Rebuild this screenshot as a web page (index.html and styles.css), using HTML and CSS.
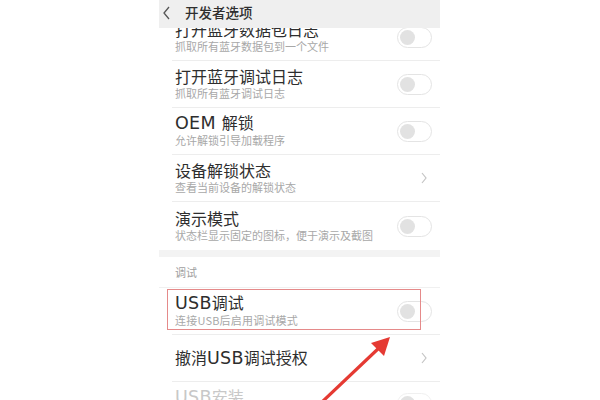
FILE: index.html
```html
<!DOCTYPE html>
<html lang="zh-CN">
<head>
    <meta charset="UTF-8">
    <meta name="viewport" content="width=device-width, initial-scale=1.0">
    <title>开发者选项</title>
    <link rel="stylesheet" href="styles.css">
</head>
<body>
    <div class="screen">
        <div class="top-bar">
            <svg class="back" width="10" height="14" viewBox="0 0 10 14">
                <polyline points="7,1 2,7 7,13" fill="none" stroke="#555" stroke-width="1.3"/>
            </svg>
            <span class="top-title">开发者选项</span>
        </div>
        <div class="list">
            <div class="row">
                <div class="text">
                    <div class="title">打开蓝牙数据包日志</div>
                    <div class="sub">抓取所有蓝牙数据包到一个文件</div>
                </div>
                <span class="switch"></span>
            </div>
            <div class="row">
                <div class="text">
                    <div class="title">打开蓝牙调试日志</div>
                    <div class="sub">抓取所有蓝牙调试日志</div>
                </div>
                <span class="switch"></span>
            </div>
            <div class="row">
                <div class="text">
                    <div class="title"><span class="en">OEM </span>解锁</div>
                    <div class="sub">允许解锁引导加载程序</div>
                </div>
                <span class="switch"></span>
            </div>
            <div class="row">
                <div class="text">
                    <div class="title">设备解锁状态</div>
                    <div class="sub">查看当前设备的解锁状态</div>
                </div>
                <svg class="chevron" width="8" height="12" viewBox="0 0 8 12">
                    <polyline points="2,1 6,6 2,11" fill="none" stroke="#c4c4c4" stroke-width="1.2"/>
                </svg>
            </div>
            <div class="row last">
                <div class="text">
                    <div class="title">演示模式</div>
                    <div class="sub">状态栏显示固定的图标，便于演示及截图</div>
                </div>
                <span class="switch"></span>
            </div>
            <div class="gap"></div>
            <div class="section">调试</div>
            <div class="row marked">
                <div class="text">
                    <div class="title"><span class="en">USB</span>调试</div>
                    <div class="sub"><span class="en">连接USB后启用调试模式</span></div>
                </div>
                <span class="switch"></span>
                <span class="mark"></span>
            </div>
            <div class="row single">
                <div class="text">
                    <div class="title">撤消<span class="en">USB</span>调试授权</div>
                </div>
                <svg class="chevron" width="8" height="12" viewBox="0 0 8 12">
                    <polyline points="2,1 6,6 2,11" fill="none" stroke="#c4c4c4" stroke-width="1.2"/>
                </svg>
            </div>
            <div class="row faded">
                <div class="text">
                    <div class="title"><span class="en">USB</span>安装</div>
                    <div class="sub">允许通过USB安装应用</div>
                </div>
                <span class="switch"></span>
            </div>
        </div>
    </div>
    <svg class="arrow" width="600" height="400" viewBox="0 0 600 400">
        <line x1="322" y1="402" x2="380" y2="347" stroke="#e53a33" stroke-width="3.2" stroke-linecap="round"/>
        <polygon points="390,337 371,343 384,356" fill="#e53a33"/>
    </svg>
</body>
</html>
```

FILE: styles.css
```css
body, html {
    margin: 0;
    padding: 0;
    height: 100%;
    background: #fff;
    overflow: hidden;
}

body {
    font-family: "Noto Sans CJK SC", "Noto Sans", sans-serif;
    color: #333;
}

.screen {
    width: 281px;
    height: 400px;
    margin-left: 159px;
    overflow: hidden;
    background: #fff;
}

.top-bar {
    position: relative;
    z-index: 2;
    height: 28px;
    background: #efefef;
    display: flex;
    align-items: center;
    padding-left: 3px;
}

.back {
    margin-top: -2px;
}

.top-title {
    margin-left: 13px;
    font-size: 13.5px;
    font-weight: 500;
    line-height: 24px;
    margin-top: -4px;
    color: #2f2f2f;
}

.list {
    margin-top: -14px;
}

.row {
    position: relative;
    height: 46px;
    margin-left: 13px;
    padding: 0 8px 0 3px;
    border-bottom: 1px solid #ededed;
    display: flex;
    align-items: center;
}

.row.last {
    border-bottom: none;
    height: 48px;
}

.text {
    flex: 1;
    margin-top: -2px;
}

.title {
    font-size: 16px;
    line-height: 20px;
    color: #2e2e2e;
}

.title .en {
    font-family: "DejaVu Sans", sans-serif;
    font-size: 17.5px;
    letter-spacing: 0.3px;
}

.sub {
    font-size: 11px;
    line-height: 15px;
    color: #a8a8a8;
}

.sub .en {
    letter-spacing: 0.2px;
}

.switch {
    position: relative;
    width: 33px;
    height: 19px;
    border: 1px solid #e4e4e4;
    border-radius: 11px;
    background: #fff;
}

.switch::before {
    content: "";
    position: absolute;
    left: 2px;
    top: 2px;
    width: 15px;
    height: 15px;
    border-radius: 50%;
    background: #e2e2e2;
}

.chevron {
    margin-right: 4px;
}

.gap {
    height: 7px;
    background: #f3f3f3;
}

.section {
    height: 30px;
    line-height: 30px;
    padding-left: 16px;
    font-size: 11px;
    color: #a0a0a0;
    border-bottom: 1px solid #f0f0f0;
}

.mark {
    position: absolute;
    left: -5px;
    top: 1px;
    width: 252px;
    height: 39px;
    border: 1px solid #e58a8a;
}

.row.faded .title,
.row.faded .sub {
    color: #c8c8c8;
}

.row.faded {
    align-items: flex-start;
    padding-top: 6px;
}

.row.faded .switch {
    margin-top: 5px;
    border-color: #f0f0f0;
}

.arrow {
    position: absolute;
    left: 0;
    top: 0;
}
```
